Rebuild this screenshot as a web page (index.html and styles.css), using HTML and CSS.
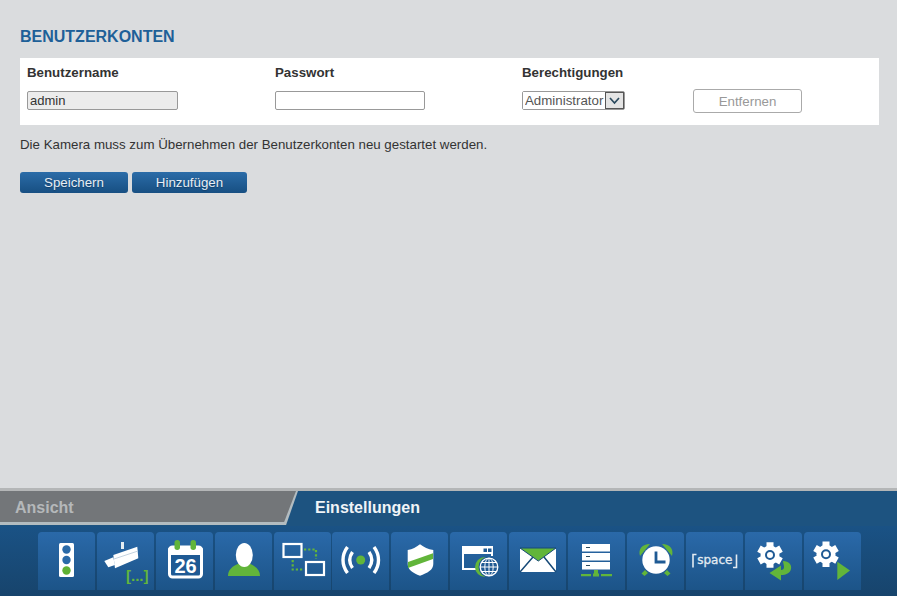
FILE: index.html
```html
<!DOCTYPE html>
<html lang="de">

<head>
    <meta charset="UTF-8">
    <title>Benutzerkonten</title>
    <link rel="stylesheet" href="styles.css">
</head>

<body>
    <main class="content">
        <h1 class="title">BENUTZERKONTEN</h1>
        <div class="users">
            <span class="label">Benutzername</span>
            <span class="label">Passwort</span>
            <span class="label">Berechtigungen</span>
            <span></span>
            <input class="field field-off" type="text" value="admin" readonly>
            <input class="field field-pw" type="password">
            <div class="role">
                <select class="role-select">
                    <option>Administrator</option>
                </select>
                <span class="role-arrow">
                    <svg width="13" height="9" viewBox="0 0 13 9"><path d="M2 2l4.5 5L11 2" fill="none" stroke="#2b4a5e" stroke-width="1.7"/></svg>
                </span>
            </div>
            <button class="remove" disabled>Entfernen</button>
        </div>
        <p class="note">Die Kamera muss zum Übernehmen der Benutzerkonten neu gestartet werden.</p>
        <div class="actions">
            <button class="btn btn-save">Speichern</button>
            <button class="btn btn-add">Hinzufügen</button>
        </div>
    </main>

    <footer class="dock">
        <div class="tabs">
            <div class="tab-view"><div class="tab-view-in">Ansicht</div></div>
            <div class="tab-settings">Einstellungen</div>
        </div>
        <nav class="tools">
            <!-- Status -->
            <a class="tool">
                <svg width="57" height="58" viewBox="0 0 57 58">
                    <rect x="21" y="11" width="15" height="34" rx="1.5" fill="#fff"/>
                    <circle cx="28.5" cy="17.5" r="4.2" fill="#2a6aa8"/>
                    <circle cx="28.5" cy="28" r="4.2" fill="#2a6aa8"/>
                    <circle cx="28.5" cy="38.5" r="4.2" fill="#5fb134"/>
                </svg>
            </a>
            <!-- Kamera -->
            <a class="tool">
                <svg width="57" height="58" viewBox="0 0 57 58">
                    <rect x="24" y="10" width="3" height="7" fill="#e6edf2"/>
                    <path d="M16.300 23L40.300 14.700 41.300 26.300 18 36.300z" fill="#fff"/>
                    <path d="M7.300 29L16.300 25.300 18 33 11.300 35.300z" fill="#fff"/>
                    <path d="M17 27l24-8" stroke="#c4d3e0" stroke-width="1"/>
                    <text class="tool-dots" x="29" y="49">[...]</text>
                </svg>
            </a>
            <!-- Kalender -->
            <a class="tool">
                <svg width="57" height="58" viewBox="0 0 57 58">
                    <rect x="13.500" y="15" width="32" height="30" rx="3" fill="#1f5a94" stroke="#fff" stroke-width="3"/>
                    <path d="M12 18a3 3 0 013-3h29a3 3 0 013 3v5H12z" fill="#fff"/>
                    <rect x="18.500" y="8" width="5.500" height="10" rx="2.700" fill="#62b53a"/>
                    <rect x="34.500" y="8" width="5.500" height="10" rx="2.700" fill="#62b53a"/>
                    <text class="tool-day" x="29.500" y="41">26</text>
                </svg>
            </a>
            <!-- Benutzer -->
            <a class="tool">
                <svg width="57" height="58" viewBox="0 0 57 58">
                    <path d="M13 44c0-6 4-10 12-13h8c8 3 12 7 12 13z" fill="#62b53a"/>
                    <ellipse cx="29.300" cy="23" rx="8.500" ry="12" fill="#fff"/>
                </svg>
            </a>
            <!-- Videoausgaenge -->
            <a class="tool">
                <svg width="57" height="58" viewBox="0 0 57 58">
                    <rect x="9.500" y="12" width="18" height="13" fill="none" stroke="#fff" stroke-width="2.200"/>
                    <rect x="32" y="30" width="18" height="13" fill="none" stroke="#fff" stroke-width="2.200"/>
                    <path d="M30 17.500h12V27M18.700 28v9.500H30" fill="none" stroke="#62b53a" stroke-width="2.200" stroke-dasharray="2.200 2"/>
                </svg>
            </a>
            <!-- Funk -->
            <a class="tool">
                <svg width="57" height="58" viewBox="0 0 57 58">
                    <circle cx="28.700" cy="28" r="4.500" fill="#62b53a"/>
                    <path d="M20.500 20c-3.500 5-3.500 11 0 16M37 20c3.500 5 3.500 11 0 16" fill="none" stroke="#fff" stroke-width="3.400"/>
                    <path d="M15.500 15c-6 8-6 18 0 26M42 15c6 8 6 18 0 26" fill="none" stroke="#fff" stroke-width="3.400"/>
                </svg>
            </a>
            <!-- Sicherheit -->
            <a class="tool">
                <svg width="57" height="58" viewBox="0 0 57 58">
                    <path d="M29 12.300c4 3 8 5 13.300 5.700v14c0 6-6 9-13.300 11.700-7.300-2.700-12.300-6-12.300-11.700V18c5-.7 8.300-2.700 12.300-5.700z" fill="#fff"/>
                    <path d="M17 30l25-8.700V27L17 36z" fill="#62b53a"/>
                </svg>
            </a>
            <!-- Netzwerk -->
            <a class="tool">
                <svg width="57" height="58" viewBox="0 0 57 58">
                    <path d="M26 37h-13V15h29v9" fill="none" stroke="#fff" stroke-width="2"/>
                    <rect x="12" y="14.700" width="30.700" height="7.300" fill="#fff"/>
                    <rect x="33.500" y="16.500" width="3.500" height="3.500" fill="#1f5a94"/>
                    <rect x="38" y="16.500" width="3.500" height="3.500" fill="#1f5a94"/>
                    <circle cx="35" cy="35" r="10" fill="#62b53a"/>
                    <circle cx="39" cy="35" r="10.500" fill="#1f5a94"/>
                    <circle cx="39" cy="35" r="8.800" fill="none" stroke="#fff" stroke-width="1.300"/>
                    <path d="M30.200 35h17.600M39 26.200v17.600M31.500 30.500h15M31.500 39.500h15" stroke="#fff"/>
                    <ellipse cx="39" cy="35" rx="4.200" ry="8.800" fill="none" stroke="#fff"/>
                </svg>
            </a>
            <!-- Mail -->
            <a class="tool">
                <svg width="57" height="58" viewBox="0 0 57 58">
                    <rect x="11" y="16" width="36" height="24" fill="#fff"/>
                    <path d="M11 16h36L29.300 29z" fill="#62b53a" stroke="#174a78" stroke-width="1"/>
                    <path d="M11 40l13-15M47 40L35 25" stroke="#174a78" stroke-width="1.500"/>
                </svg>
            </a>
            <!-- Server -->
            <a class="tool">
                <svg width="57" height="58" viewBox="0 0 57 58">
                    <rect x="14" y="12" width="28" height="7.500" fill="#fff"/>
                    <rect x="14" y="21" width="28" height="7.500" fill="#fff"/>
                    <rect x="14" y="30" width="28" height="7.500" fill="#fff"/>
                    <path d="M18 15.500h4M18 24.500h4M18 33.500h4" stroke="#2b4a5e" stroke-width="1.200"/>
                    <path d="M26 38h4v3.500h1v3h-6v-3h1zM13 42h10v2.200H13zM33 42h11v2.200H33z" fill="#62b53a"/>
                </svg>
            </a>
            <!-- Zeit -->
            <a class="tool">
                <svg width="57" height="58" viewBox="0 0 57 58">
                    <path d="M13 24c-2-7 2-12 10-12zM45 24c2-7-2-12-10-12z" fill="#62b53a"/>
                    <path d="M14.500 41.500l3.500-3.500 3 3-3.500 3zM43.500 41.500L40 38l-3 3 3.500 3z" fill="#62b53a"/>
                    <circle cx="29" cy="28" r="13.700" fill="#fff"/>
                    <path d="M29 19.500v10.500h9.500" fill="none" stroke="#1f5a94" stroke-width="2.800"/>
                </svg>
            </a>
            <!-- SD-Karte -->
            <a class="tool">
                <svg width="57" height="58" viewBox="0 0 57 58">
                    <path d="M7 35.500V22.500h3.500M50.500 22.500v13H47" fill="none" stroke="#e3ebf2" stroke-width="1.600"/>
                    <text class="tool-space" x="28.800" y="31.500">space</text>
                </svg>
            </a>
            <!-- Wartung -->
            <a class="tool">
                <svg width="57" height="58" viewBox="0 0 57 58">
                    <g transform="translate(25 23)" stroke="#fff" stroke-width="7">
                        <circle r="9.500" fill="#fff" stroke="none"/>
                        <path d="M0-12.700V12.700M-11-6.350L11 6.350M-11 6.350L11-6.350"/>
                    </g>
                    <circle cx="25" cy="23" r="4" fill="#fff" stroke="#1f5a94" stroke-width="2"/>
                    <path d="M38 29c6 0 9 4 8 8-1 4-5 6-10 6v5.500L24.500 41 36 33.500V38c2 0 3-1 3-3 0-2-1-4-1-6z" fill="#62b53a"/>
                </svg>
            </a>
            <!-- Assistent -->
            <a class="tool">
                <svg width="57" height="58" viewBox="0 0 57 58">
                    <g transform="translate(22 22.300)" stroke="#fff" stroke-width="7">
                        <circle r="9.500" fill="#fff" stroke="none"/>
                        <path d="M0-12.700V12.700M-11-6.350L11 6.350M-11 6.350L11-6.350"/>
                    </g>
                    <circle cx="22" cy="22.300" r="4" fill="#fff" stroke="#1f5a94" stroke-width="2"/>
                    <path d="M33.300 29.700L46 38.500 33.300 48z" fill="#62b53a"/>
                </svg>
            </a>
        </nav>
    </footer>
</body>

</html>
```

FILE: styles.css
```css
* {
    box-sizing: border-box;
}

body {
    margin: 0;
    height: 596px;
    overflow: hidden;
    display: flex;
    flex-direction: column;
    font-family: "Liberation Sans", Arial, sans-serif;
    background-color: #dadcde;
    color: #333;
}

.content {
    flex: 1;
    padding: 27px 18px 0 20px;
}

.title {
    margin: 0 0 12px;
    font-size: 16px;
    line-height: 19px;
    font-weight: bold;
    color: #1e6098;
}

.users {
    display: grid;
    grid-template-columns: 248px 247px 171px 1fr;
    grid-template-rows: 22px 24px;
    row-gap: 6px;
    align-items: center;
    height: 67px;
    padding: 3px 0 0 7px;
    background-color: #fff;
}

.label {
    font-size: 13.3px;
    font-weight: bold;
}

.field {
    height: 19px;
    margin-bottom: 1px;
    padding: 0 2px;
    border: 1px solid #999;
    border-radius: 2px;
    font-family: inherit;
    font-size: 13px;
    color: #333;
    background-color: #fff;
}

.field-off {
    width: 151px;
    background-color: #ececec;
}

.field-pw {
    width: 150px;
}

.role {
    display: flex;
    width: 103px;
    height: 19px;
    margin-bottom: 1px;
    border: 1px solid #999;
    border-radius: 2px;
}

.role-select {
    flex: 1;
    min-width: 0;
    padding: 0 0 0 2px;
    border: none;
    appearance: none;
    font-family: inherit;
    font-size: 13.3px;
    color: #555;
    background-color: #fff;
}

.role-arrow {
    display: flex;
    align-items: center;
    justify-content: center;
    width: 19px;
    border: 1px solid #555;
    background-color: #e4e4e4;
}

.remove {
    width: 109px;
    height: 24px;
    border: 1px solid #aaa;
    border-radius: 3px;
    font-family: inherit;
    font-size: 13.3px;
    color: #999;
    background-color: #fff;
}

.note {
    margin: 12px 0 19px;
    font-size: 13.3px;
    line-height: 16px;
}

.actions {
    display: flex;
    gap: 4px;
}

.btn {
    height: 21px;
    padding: 0;
    border: none;
    border-radius: 3px;
    font-family: inherit;
    font-size: 13.3px;
    color: #e8eef4;
    text-shadow: 0 1px 1px #123f68;
    background: linear-gradient(#2b6ca8, #174f82);
}

.btn-save {
    width: 108px;
}

.btn-add {
    width: 115px;
}

.dock {
    height: 108px;
    border-top: 3px solid #b4b6b7;
    background-color: #1d5380;
}

.tabs {
    display: flex;
    height: 35px;
}

.tab-view {
    width: 298px;
    height: 34px;
    background-color: #b3bcc0;
    clip-path: polygon(0 0, 100% 0, 96% 100%, 0 100%);
}

.tab-view-in {
    width: 296px;
    height: 31px;
    padding: 1px 0 0 15px;
    font-size: 16px;
    line-height: 32px;
    font-weight: bold;
    color: #b5b8ba;
    background-color: #737679;
    clip-path: polygon(0 0, 100% 0, 96% 100%, 0 100%);
}

.tab-settings {
    padding: 1px 0 0 17px;
    font-size: 16px;
    line-height: 32px;
    font-weight: bold;
    color: #f0f4f7;
}

.tools {
    display: flex;
    gap: 1.9px;
    height: 70px;
    padding: 6px 0 0 38px;
    background: linear-gradient(#1a5285, #17446c);
}

.tool {
    width: 57px;
    height: 58px;
    border-radius: 4px 4px 0 0;
    background: linear-gradient(#2a69a9, #1c5488);
}

.tool svg {
    display: block;
}

.tool-dots {
    font-size: 15px;
    font-weight: bold;
    fill: #62b53a;
}

.tool-day {
    font-size: 20px;
    font-weight: bold;
    text-anchor: middle;
    fill: #fff;
}

.tool-space {
    font-family: "DejaVu Sans", sans-serif;
    font-size: 12px;
    text-anchor: middle;
    fill: #e3ebf2;
    stroke: #e3ebf2;
    stroke-width: 0.3px;
}
```
